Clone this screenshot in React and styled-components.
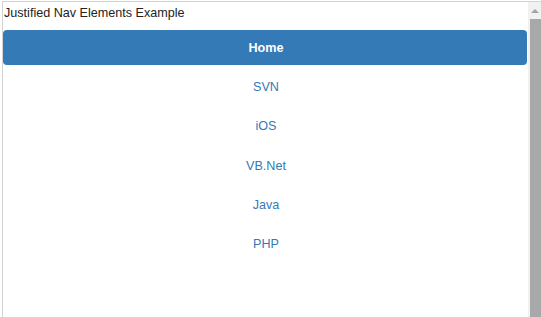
import React from 'react';
import styled, { createGlobalStyle } from 'styled-components';

const GlobalStyle = createGlobalStyle`
  html, body {
    margin: 0;
    padding: 0;
    background: #fff;
  }
  body {
    font-family: "Liberation Sans", Arial, sans-serif;
    overflow: hidden;
  }
`;

const Frame = styled.div`
  display: flex;
  margin: 1px 0 0 2px;
  height: 316px;
  border-top: 1px solid #d3d3d3;
  border-left: 1px solid #d3d3d3;
`;

const Content = styled.div`
  flex: 1;
  min-width: 0;
`;

const Title = styled.div`
  font-size: 12.6px;
  line-height: 16px;
  color: #222;
  padding: 3px 0 0 1px;
  height: 28px;
  box-sizing: border-box;
`;

const NavList = styled.ul`
  list-style: none;
  margin: 0;
  padding: 0;
  display: flex;
  flex-direction: column;
  gap: 4.4px;
`;

const NavLink = styled.a`
  display: flex;
  align-items: center;
  justify-content: center;
  height: 35px;
  padding-left: 2px;
  border-radius: 4px;
  font-size: 12.6px;
  text-decoration: none;
  color: ${(p) => (p.$active ? '#fff' : '#337ab7')};
  background: ${(p) => (p.$active ? '#337ab7' : 'transparent')};
  font-weight: ${(p) => (p.$active ? 'bold' : 'normal')};
`;

const Scrollbar = styled.div`
  width: 13px;
  margin-left: 1px;
  display: flex;
  flex-direction: column;
  background: #f1f1f1;
`;

const ArrowButton = styled.div`
  height: 17px;
  display: flex;
  align-items: center;
  justify-content: center;
`;

const Thumb = styled.div`
  flex: 1;
  margin-left: 2px;
  background: #a8a8a8;
`;

const items = ['Home', 'SVN', 'iOS', 'VB.Net', 'Java', 'PHP'];

export default function App() {
  return (
    <>
      <GlobalStyle />
      <Frame>
        <Content>
          <Title>Justified Nav Elements Example</Title>
          <NavList>
            {items.map((item, i) => (
              <li key={item}>
                <NavLink href="#" $active={i === 0}>
                  {item}
                </NavLink>
              </li>
            ))}
          </NavList>
        </Content>
        <Scrollbar>
          <ArrowButton>
            <svg width="8" height="5" viewBox="0 0 8 5">
              <path d="M0 5 L4 1 L8 5 Z" fill="#a3a3a3" />
            </svg>
          </ArrowButton>
          <Thumb />
        </Scrollbar>
      </Frame>
    </>
  );
}
